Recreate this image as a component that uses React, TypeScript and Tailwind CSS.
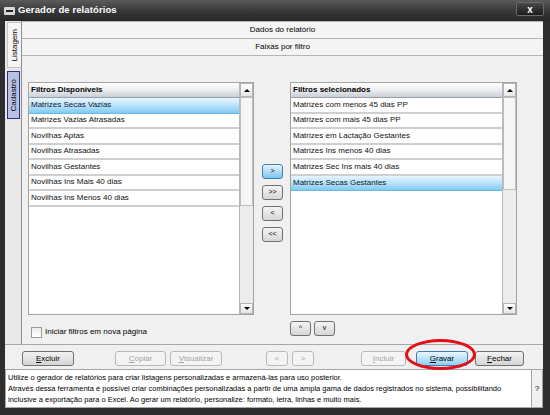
import React from "react";

const font = "font-['Liberation_Sans',Arial,sans-serif]";

const disponiveis = [
  "Matrizes Secas Vazias",
  "Matrizes Vazias Atrasadas",
  "Novilhas Aptas",
  "Novilhas Atrasadas",
  "Novilhas Gestantes",
  "Novilhas Ins Mais 40 dias",
  "Novilhas Ins Menos 40 dias",
];

const selecionados = [
  "Matrizes com menos 45 dias PP",
  "Matrizes com mais 45 dias PP",
  "Matrizes em Lactação Gestantes",
  "Matrizes Ins menos 40 dias",
  "Matrizes Sec Ins mais 40 dias",
  "Matrizes Secas Gestantes",
];

function Row({ text, selected }: { text: string; selected?: boolean }) {
  return (
    <div
      className={
        selected
          ? "h-[15.5px] flex items-center pl-[2px] text-[8px] text-[#0b1a2a] bg-linear-to-b from-[#e8f6fe] via-[#b9e3fa] to-[#7fcaf1] border-b border-[#6fb6e0]"
          : "h-[15.5px] flex items-center pl-[2px] text-[8px] text-[#111] bg-white border-b-2 border-[#cfcfcf]"
      }
    >
      {text}
    </div>
  );
}

function Scroll({ thumb }: { thumb: string }) {
  return (
    <div className="w-[14px] flex flex-col border-l border-[#b8b8b8] bg-[#ececec]">
      <div className="h-[14px] flex items-center justify-center border border-[#b5b5b5] bg-linear-to-b from-white to-[#e6e6e6]">
        <div className="w-0 h-0 border-l-[3px] border-r-[3px] border-b-[3px] border-l-transparent border-r-transparent border-b-black" />
      </div>
      <div className={thumb + " border border-[#bdbdbd] bg-[#f6f6f6]"} />
      <div className="flex-1" />
      <div className="h-[11px] flex items-center justify-center border border-[#b5b5b5] bg-linear-to-b from-white to-[#e6e6e6]">
        <div className="w-0 h-0 border-l-[3px] border-r-[3px] border-t-[3px] border-l-transparent border-r-transparent border-t-black" />
      </div>
    </div>
  );
}

function List({ title, items, sel, thumb, w }: { title: string; items: string[]; sel: number; thumb: string; w: string }) {
  return (
    <div className={w + " h-[233px] flex border border-[#a3a3a3] bg-white"}>
      <div className="flex-1 flex flex-col">
        <div className="h-[15px] flex items-center pl-[2px] text-[8px] font-bold bg-linear-to-b from-white via-[#eceef1] to-[#c9ced6] border-b border-[#9aa0a8]">
          {title}
        </div>
        {items.map((t, i) => (
          <Row key={t} text={t} selected={i === sel} />
        ))}
      </div>
      <Scroll thumb={thumb} />
    </div>
  );
}

function SmallBtn({ label, blue }: { label: string; blue?: boolean }) {
  return (
    <div
      className={
        blue
          ? "w-[21px] h-[15px] rounded-[3px] border border-[#3c7fb1] bg-linear-to-b from-[#e5f4fc] to-[#7cc4ee] flex items-center justify-center text-[7px]"
          : "w-[21px] h-[15px] rounded-[3px] border border-[#707070] bg-linear-to-b from-[#f4f4f4] to-[#d6d6d6] flex items-center justify-center text-[7px]"
      }
    >
      {label}
    </div>
  );
}

function Btn({ children, w, kind }: { children: React.ReactNode; w: string; kind?: "off" | "blue" }) {
  const base = w + " h-[15px] rounded-[3px] border flex items-center justify-center text-[8px] ";
  if (kind === "off") return <div className={base + "border-[#b7babc] bg-[#f4f4f4] text-[#a3a3a3]"}>{children}</div>;
  if (kind === "blue")
    return <div className={base + "border-[#3c7fb1] bg-linear-to-b from-[#eaf6fd] to-[#8fd0f3] text-black"}>{children}</div>;
  return <div className={base + "border-[#707070] bg-linear-to-b from-[#f3f3f3] to-[#d5d5d5] text-black"}>{children}</div>;
}

export default function App() {
  return (
    <div className={font + " w-[550px] h-[415px] bg-[#2e2e2e] flex flex-col overflow-hidden"}>
      <div className="h-[21px] flex items-center bg-linear-to-b from-[#5b5b5b] via-[#3a3a3a] to-[#262626]">
        <div className="ml-[4px] w-[11px] h-[8px] rounded-[1px] bg-[#d9d9d9] flex items-center justify-center">
          <div className="w-[7px] h-[2px] bg-[#222]" />
        </div>
        <span className="ml-[3px] text-white font-bold text-[9.5px] tracking-[0.1px]">Gerador de relatórios</span>
        <div className="ml-auto mr-[6px] mb-[3px] w-[28px] h-[14px] rounded-[2px] border border-[#6a6a6a] bg-linear-to-b from-[#4a4a4a] to-[#1c1c1c] flex items-center justify-center text-white font-bold text-[10px]">
          x
        </div>
      </div>

      <div className="flex-1 flex flex-col pl-[5px] pr-[7px] pb-[7px]">
        <div className="h-[323px] flex bg-[#f0f0f0]">
          <div className="w-[16px] bg-[#e9e9e9] flex flex-col items-end pt-[1px]">
            <div className="w-[14px] h-[46px] bg-[#f6f6f6] border-l border-t border-b border-[#c4c4c4] flex items-center justify-center">
              <span className="text-[8px] [writing-mode:vertical-rl] rotate-180">Listagem</span>
            </div>
            <div className="mt-[3px] mr-[1px] w-[13px] h-[48px] bg-[#b7c2e2] border border-[#30307a] flex items-center justify-center">
              <span className="text-[8px] [writing-mode:vertical-rl] rotate-180">Cadastro</span>
            </div>
          </div>
          <div className="flex-1 flex flex-col border-l border-[#8d8d8d]">
            <div className="h-[18px] border-t border-b border-[#b5b5b5] bg-[#f4f4f4] flex items-center justify-center text-[8px]">
              Dados do relatório
            </div>
            <div className="h-[17px] border-b border-[#b5b5b5] bg-[#f4f4f4] flex items-center justify-center text-[8px]">
              Faixas por filtro
            </div>
            <div className="flex pt-[26px] pl-[6px]">
              <div className="flex flex-col">
                <List title="Filtros Disponíveis" items={disponiveis} sel={0} thumb="h-[109px]" w="w-[226px]" />
                <div className="mt-[11px] ml-[3px] flex items-center">
                  <div className="w-[11px] h-[11px] border border-[#9a9a9a] bg-linear-to-b from-[#ececec] to-white" />
                  <span className="ml-[3px] text-[8px]">Iniciar filtros em nova página</span>
                </div>
              </div>
              <div className="ml-[8px] mt-[82px] flex flex-col gap-[6px]">
                <SmallBtn label=">" blue />
                <SmallBtn label=">>" />
                <SmallBtn label="<" />
                <SmallBtn label="<<" />
              </div>
              <div className="ml-[7px] flex flex-col">
                <List title="Filtros selecionados" items={selecionados} sel={5} thumb="h-[93px]" w="w-[227px]" />
                <div className="mt-[6px] flex gap-[3px]">
                  <SmallBtn label="^" />
                  <SmallBtn label="v" />
                </div>
              </div>
            </div>
          </div>
        </div>

        <div className="h-[25px] flex items-start pt-[6px] pl-[17px] border-t border-[#a8a8a8] bg-[#f0f0f0] relative">
          <Btn w="w-[52px]">
            <u>E</u>xcluir
          </Btn>
          <div className="ml-[41px]">
            <Btn w="w-[51px]" kind="off">
              <u>C</u>opiar
            </Btn>
          </div>
          <div className="ml-[4px]">
            <Btn w="w-[52px]" kind="off">
              <u>V</u>isualizar
            </Btn>
          </div>
          <div className="ml-[44px]">
            <Btn w="w-[22px]" kind="off">
              &lt;
            </Btn>
          </div>
          <div className="ml-[4px]">
            <Btn w="w-[22px]" kind="off">
              &gt;
            </Btn>
          </div>
          <div className="ml-[47px]">
            <Btn w="w-[45px]" kind="off">
              <u>I</u>ncluir
            </Btn>
          </div>
          <div className="ml-[10px]">
            <Btn w="w-[52px]" kind="blue">
              <u>G</u>ravar
            </Btn>
          </div>
          <div className="ml-[7px]">
            <Btn w="w-[49px]">
              <u>F</u>echar
            </Btn>
          </div>
          <div className="absolute left-[400px] top-[-6px] w-[71px] h-[31px] rounded-[50%] border-[3px] border-[#e3101a]" />
        </div>

        <div className="flex-1 flex">
          <div className="flex-1 bg-white border border-[#a5a5a5] pl-[2px] pt-[2px] text-[7.5px] leading-[11px] text-black whitespace-nowrap overflow-hidden">
            Utilize o gerador de relatórios para criar listagens personalizadas e armazená-las para uso posterior.
            <br />
            Através dessa ferramenta é possível criar combinações personalizadas a partir de uma ampla gama de dados registrados no sistema, possibilitando
            <br />
            inclusive a exportação para o Excel. Ao gerar um relatório, personalize: formato, letra, linhas e muito mais.
          </div>
          <div className="w-[11px] bg-[#f0f0f0] border-t border-b border-r border-[#a5a5a5] flex items-center justify-center text-[8px]">
            ?
          </div>
        </div>
      </div>
    </div>
  );
}
